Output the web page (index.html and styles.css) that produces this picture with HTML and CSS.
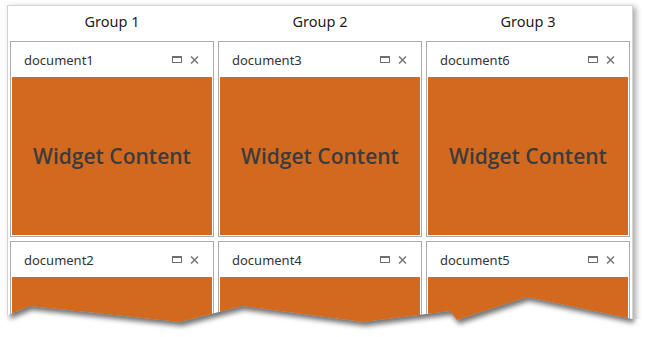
FILE: index.html
```html
<!DOCTYPE html>
<html>
<head>
    <meta charset="UTF-8">
    <link rel="stylesheet" href="styles.css">
</head>
<body>
    <div class="window">
        <div class="group">
            <div class="group-title">Group 1</div>
            <div class="doc">
                <div class="doc-head">
                    <span class="doc-name">document1</span>
                    <span class="btn-max"></span>
                    <svg class="btn-close" width="9" height="8" viewBox="0 0 9 8"><path d="M1 0.5 L8 7.5 M8 0.5 L1 7.5" /></svg>
                </div>
                <div class="doc-body">Widget Content</div>
            </div>
            <div class="doc">
                <div class="doc-head">
                    <span class="doc-name">document2</span>
                    <span class="btn-max"></span>
                    <svg class="btn-close" width="9" height="8" viewBox="0 0 9 8"><path d="M1 0.5 L8 7.5 M8 0.5 L1 7.5" /></svg>
                </div>
                <div class="doc-body cut"></div>
            </div>
        </div>
        <div class="group">
            <div class="group-title">Group 2</div>
            <div class="doc">
                <div class="doc-head">
                    <span class="doc-name">document3</span>
                    <span class="btn-max"></span>
                    <svg class="btn-close" width="9" height="8" viewBox="0 0 9 8"><path d="M1 0.5 L8 7.5 M8 0.5 L1 7.5" /></svg>
                </div>
                <div class="doc-body">Widget Content</div>
            </div>
            <div class="doc">
                <div class="doc-head">
                    <span class="doc-name">document4</span>
                    <span class="btn-max"></span>
                    <svg class="btn-close" width="9" height="8" viewBox="0 0 9 8"><path d="M1 0.5 L8 7.5 M8 0.5 L1 7.5" /></svg>
                </div>
                <div class="doc-body cut"></div>
            </div>
        </div>
        <div class="group">
            <div class="group-title">Group 3</div>
            <div class="doc">
                <div class="doc-head">
                    <span class="doc-name">document6</span>
                    <span class="btn-max"></span>
                    <svg class="btn-close" width="9" height="8" viewBox="0 0 9 8"><path d="M1 0.5 L8 7.5 M8 0.5 L1 7.5" /></svg>
                </div>
                <div class="doc-body">Widget Content</div>
            </div>
            <div class="doc">
                <div class="doc-head">
                    <span class="doc-name">document5</span>
                    <span class="btn-max"></span>
                    <svg class="btn-close" width="9" height="8" viewBox="0 0 9 8"><path d="M1 0.5 L8 7.5 M8 0.5 L1 7.5" /></svg>
                </div>
                <div class="doc-body cut"></div>
            </div>
        </div>
    </div>

    <!-- torn bottom edge of the screenshot -->
    <svg class="tear" width="645" height="337" viewBox="0 0 645 337">
        <defs>
            <clipPath id="below">
                <polygon points="0,315 8,315 30,306 180,322 242,306 363,322 450,311 457,320 527,297 632,319 645,319 645,337 0,337" />
            </clipPath>
            <filter id="blur" x="-10%" y="-10%" width="120%" height="130%">
                <feGaussianBlur stdDeviation="2.5" />
            </filter>
        </defs>
        <polygon fill="#fff" points="0,315 8,315 30,306 180,322 242,306 363,322 450,311 457,320 527,297 632,319 645,319 645,337 0,337" />
        <g clip-path="url(#below)">
            <polygon fill="rgba(0,0,0,0.55)" filter="url(#blur)" transform="translate(2,4)"
                points="8,250 632,250 632,319 527,297 457,320 450,311 363,322 242,306 180,322 30,306 8,315" />
        </g>
    </svg>
</body>
</html>
```

FILE: styles.css
```css
body {
    margin: 0;
    background-color: #fff;
    width: 645px;
    height: 337px;
    overflow: hidden;
    position: relative;
    font-family: 'Noto Sans', 'Open Sans', sans-serif;
}

.window {
    margin: 5px 0 0 7px;
    width: 620px;
    height: 326px;
    padding: 0 2px 0 2px;
    border: 1px solid #d4d4d4;
    border-bottom: none;
    background-color: #fff;
    box-shadow: 3px 2px 6px rgba(0, 0, 0, 0.35);
    display: grid;
    grid-template-columns: 204px 204px 204px;
    grid-column-gap: 4px;
    align-items: start;
    overflow: hidden;
}

.group {
    display: flex;
    flex-direction: column;
    gap: 4px;
}

.group-title {
    height: 31px;
    line-height: 30px;
    text-align: center;
    font-size: 14.5px;
    color: #1e1e1e;
}

.doc {
    border: 1px solid #ababab;
    background-color: #fff;
    padding: 0 1px 1px 1px;
}

.doc-head {
    height: 35px;
    display: flex;
    align-items: center;
    padding: 0 13px 0 12px;
}

.doc-name {
    flex: 1;
    font-size: 13px;
    color: #333;
    padding-top: 1px;
}

.btn-max {
    width: 8px;
    height: 4px;
    border: 1px solid #707070;
    border-top-width: 2px;
    margin-right: 8px;
}

.btn-close {
    stroke: #7a7a7a;
    stroke-width: 1.5;
}

.doc-body {
    height: 158px;
    background-color: #d2691e;
    color: #3c3c3c;
    font-family: 'Open Sans', 'Noto Sans', sans-serif;
    font-weight: 600;
    font-size: 21px;
    display: flex;
    align-items: center;
    justify-content: center;
}

.doc-body.cut {
    height: 50px;
}

.tear {
    position: absolute;
    left: 0;
    top: 0;
    pointer-events: none;
}
```
